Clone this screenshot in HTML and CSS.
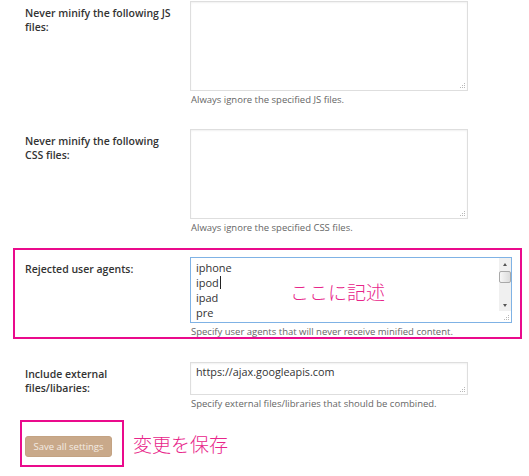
FILE: index.html
```html
<!DOCTYPE html>
<html lang="en">
<head>
<meta charset="utf-8">
<title>Settings</title>
<link rel="stylesheet" href="styles.css">
</head>
<body>
<div class="page">
  <div class="row row-first">
    <div class="label">Never minify the following JS<br>files:</div>
    <div class="field">
      <div class="ta ta-lg">
        <svg class="grip" width="7" height="7" viewBox="0 0 7 7"><rect x="5" y="1" width="1" height="1"/><rect x="3" y="3" width="1" height="1"/><rect x="5" y="3" width="1" height="1"/><rect x="1" y="5" width="1" height="1"/><rect x="3" y="5" width="1" height="1"/><rect x="5" y="5" width="1" height="1"/></svg>
      </div>
      <p class="help">Always ignore the specified JS files.</p>
    </div>
  </div>

  <div class="row row-second">
    <div class="label">Never minify the following<br>CSS files:</div>
    <div class="field">
      <div class="ta ta-lg">
        <svg class="grip" width="7" height="7" viewBox="0 0 7 7"><rect x="5" y="1" width="1" height="1"/><rect x="3" y="3" width="1" height="1"/><rect x="5" y="3" width="1" height="1"/><rect x="1" y="5" width="1" height="1"/><rect x="3" y="5" width="1" height="1"/><rect x="5" y="5" width="1" height="1"/></svg>
      </div>
      <p class="help">Always ignore the specified CSS files.</p>
    </div>
  </div>

  <div class="row row-mark">
    <div class="label">Rejected user agents:</div>
    <div class="field field-wide">
      <div class="ta ta-focus">
        <div class="ta-text">
          <div>iphone</div>
          <div>ipod<span class="caret"></span></div>
          <div>ipad</div>
          <div>pre</div>
        </div>
        <div class="sb-col">
          <div class="scrollbar">
            <div class="sb-btn"><span class="tri-up"></span></div>
            <div class="sb-thumb"></div>
            <div class="sb-track"></div>
            <div class="sb-btn"><span class="tri-down"></span></div>
          </div>
          <div class="sb-corner">
            <svg width="7" height="7" viewBox="0 0 7 7"><rect x="5" y="1" width="1" height="1"/><rect x="3" y="3" width="1" height="1"/><rect x="5" y="3" width="1" height="1"/><rect x="1" y="5" width="1" height="1"/><rect x="3" y="5" width="1" height="1"/><rect x="5" y="5" width="1" height="1"/></svg>
          </div>
        </div>
      </div>
      <p class="help help-tight">Specify user agents that will never receive minified content.</p>
    </div>
    <span class="note note-over">ここに記述</span>
  </div>

  <div class="row row-fourth">
    <div class="label">Include external<br>files/libaries:</div>
    <div class="field">
      <div class="ta ta-sm">
        <div class="ta-line">https://ajax.googleapis.com</div>
        <svg class="grip" width="7" height="7" viewBox="0 0 7 7"><rect x="5" y="1" width="1" height="1"/><rect x="3" y="3" width="1" height="1"/><rect x="5" y="3" width="1" height="1"/><rect x="1" y="5" width="1" height="1"/><rect x="3" y="5" width="1" height="1"/><rect x="5" y="5" width="1" height="1"/></svg>
      </div>
      <p class="help">Specify external files/libraries that should be combined.</p>
    </div>
  </div>

  <div class="save">
    <div class="save-box">
      <button class="btn" type="button">Save all settings</button>
    </div>
    <span class="note">変更を保存</span>
  </div>
</div>
</body>
</html>
```

FILE: styles.css
```css
html, body {
  margin: 0;
  padding: 0;
  background: #fff;
}

body {
  font-family: "Open Sans", "Noto Sans", sans-serif;
  color: #333;
  width: 529px;
  height: 476px;
  overflow: hidden;
}

.row {
  display: flex;
  padding-left: 25px;
}

.row-first { margin-top: 1px; }
.row-second { margin-top: 22px; }
.row-fourth { margin-top: 23px; }

.row-mark {
  position: relative;
  margin-top: 13px;
  margin-left: 13px;
  width: 509px;
  box-sizing: border-box;
  border: 2px solid #ea0a8c;
  padding: 7px 0 0 10px;
}

.label {
  width: 165px;
  flex: none;
  font-size: 10.5px;
  font-weight: 600;
  line-height: 14px;
  padding-top: 5px;
  color: #333;
}

.field {
  width: 278px;
}

.field-wide {
  width: 322px;
}

.ta {
  position: relative;
  box-sizing: border-box;
  border: 1px solid #dedede;
  box-shadow: inset 0 1px 2px rgba(0, 0, 0, 0.06);
  background: #fff;
}

.ta-lg { height: 90px; }
.ta-sm { height: 33px; }

.grip {
  position: absolute;
  right: 1px;
  bottom: 1px;
  fill: #b8b8b8;
}

.ta-line {
  font-size: 10.8px;
  line-height: 14px;
  padding: 2px 5px;
  color: #333;
}

.ta-focus {
  display: flex;
  height: 66px;
  border-color: #7fb2e5;
  box-shadow: none;
}

.ta-text {
  flex: 1;
  font-size: 11px;
  line-height: 15px;
  padding: 2px 5px;
  color: #333;
}

.caret {
  display: inline-block;
  width: 1px;
  height: 13px;
  background: #222;
  vertical-align: -2px;
  margin-left: 1px;
}

.sb-col {
  width: 12px;
  display: flex;
  flex-direction: column;
}

.scrollbar {
  height: 53px;
  display: flex;
  flex-direction: column;
  background: #f0f0f0;
}

.sb-btn {
  height: 12px;
  display: flex;
  align-items: center;
  justify-content: center;
}

.tri-up {
  width: 0;
  height: 0;
  border-left: 2.5px solid transparent;
  border-right: 2.5px solid transparent;
  border-bottom: 3px solid #555;
}

.tri-down {
  width: 0;
  height: 0;
  border-left: 2.5px solid transparent;
  border-right: 2.5px solid transparent;
  border-top: 3px solid #555;
}

.sb-thumb {
  height: 12px;
  margin: 1px 0 0 0;
  box-sizing: border-box;
  border: 1px solid #a9a9a9;
  border-radius: 2px;
  background: linear-gradient(to right, #f6f6f6, #dcdcdc);
}

.sb-track {
  flex: 1;
}

.sb-corner {
  flex: 1;
  display: flex;
  align-items: flex-end;
  justify-content: flex-end;
  padding: 0 1px 1px 0;
  fill: #b8b8b8;
}

.help {
  margin: 2px 0 0;
  padding-left: 1px;
  font-size: 9.5px;
  line-height: 14px;
  color: #666;
}

.help-tight {
  margin-top: 3px;
  line-height: 11px;
}

.note {
  font-family: "Noto Sans CJK JP", sans-serif;
  font-weight: 300;
  font-size: 19px;
  line-height: 20px;
  color: #e8258a;
}

.note-over {
  position: absolute;
  left: 275px;
  top: 32px;
}

.save {
  display: flex;
  align-items: center;
  margin-top: 9px;
  margin-left: 20px;
}

.save-box {
  border: 2px solid #ea0a8c;
  padding: 14px 10px 8px 3px;
  display: flex;
}

.save .note {
  margin-left: 9px;
}

.btn {
  width: 87px;
  height: 21px;
  padding: 0;
  border: 1px solid #c4a383;
  border-radius: 3px;
  background: #c9a98a;
  color: #f4ece4;
  font-family: "Open Sans", sans-serif;
  font-size: 9.5px;
  line-height: 19px;
  text-align: center;
}
```
